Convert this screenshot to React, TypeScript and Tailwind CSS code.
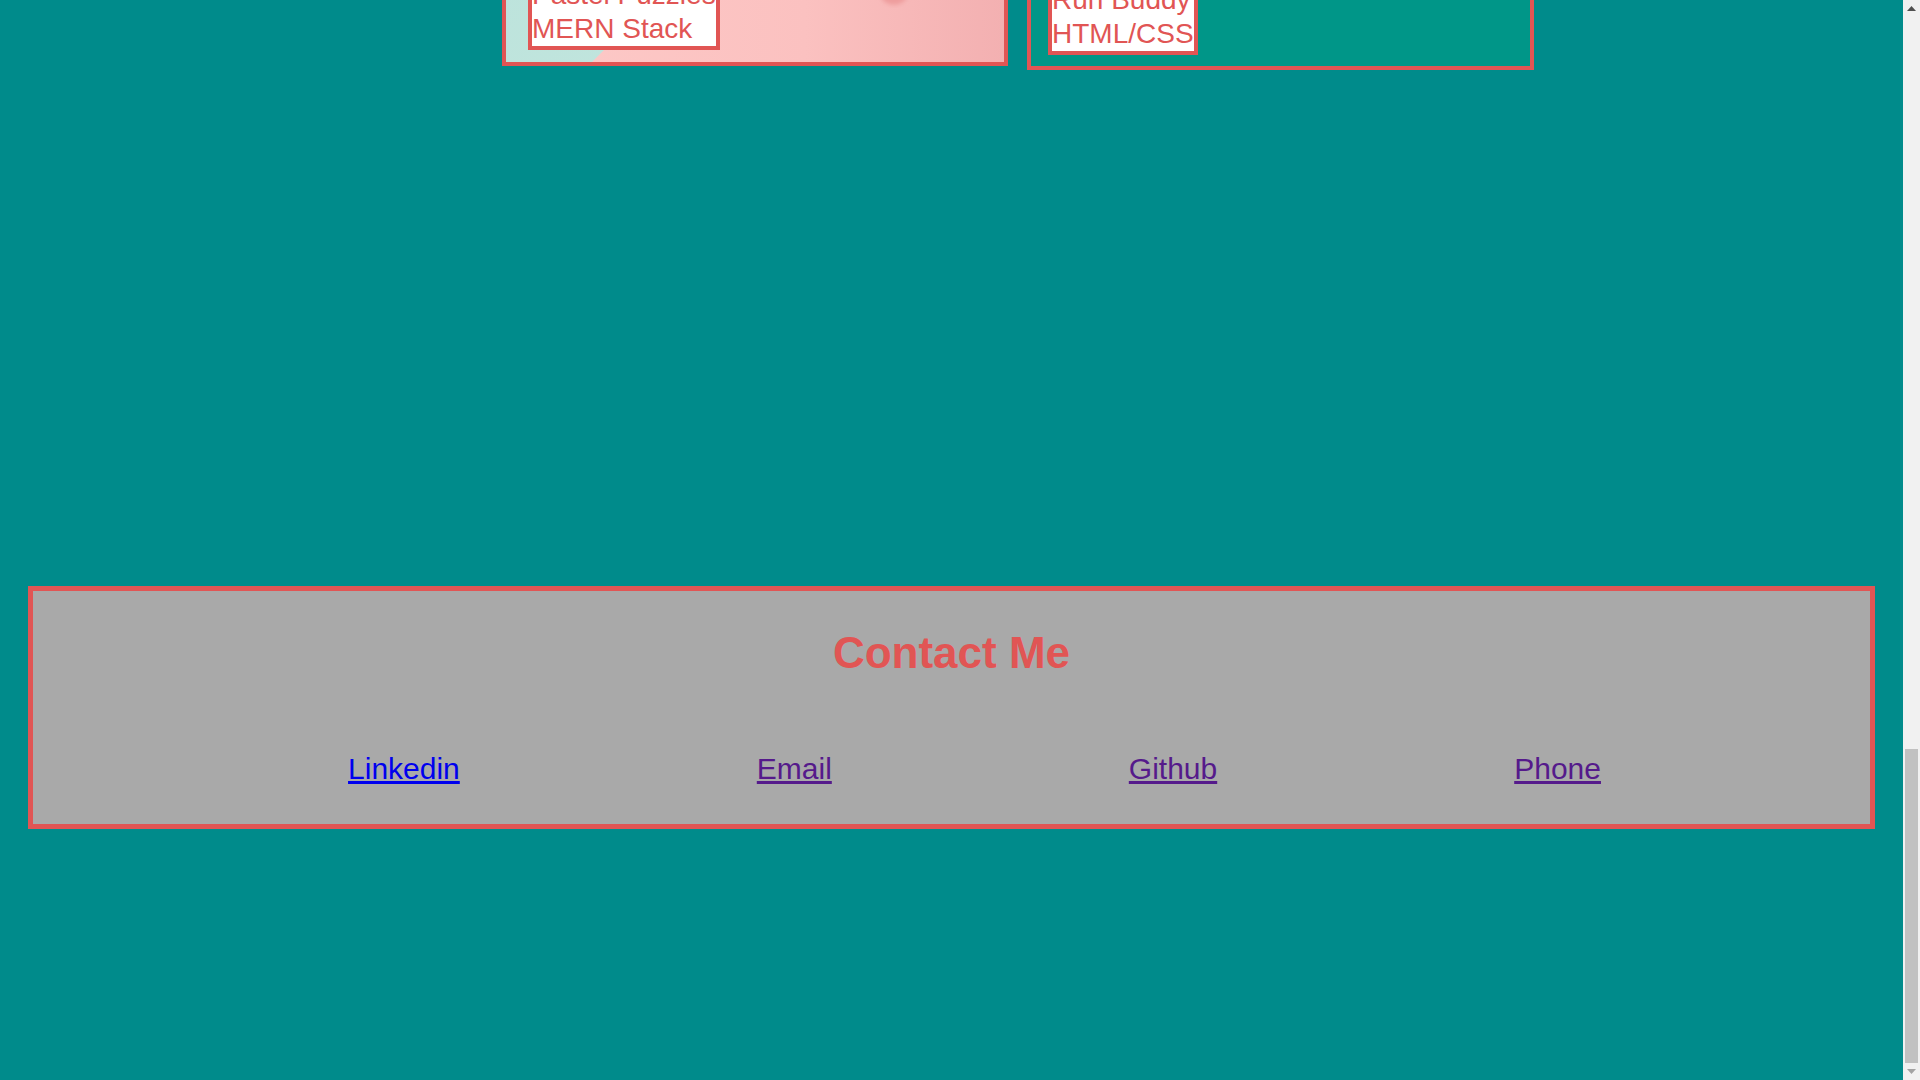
import React from "react"

// pastel puzzle screenshot (pink with mint corner)
function PuzzleArt() {
    return (
        <svg width="498" height="380" viewBox="0 0 498 380" preserveAspectRatio="none" className="block">
            <defs>
                <linearGradient id="pinkbg" x1="0" y1="0" x2="1" y2="0">
                    <stop offset="0" stopColor="#fdcac8" />
                    <stop offset="0.6" stopColor="#fbc1c0" />
                    <stop offset="1" stopColor="#f3b0b1" />
                </linearGradient>
                <linearGradient id="mint" x1="0" y1="0" x2="1" y2="1">
                    <stop offset="0" stopColor="#b7e2da" />
                    <stop offset="1" stopColor="#c6e6df" />
                </linearGradient>
                <filter id="soft">
                    <feGaussianBlur stdDeviation="2" />
                </filter>
            </defs>
            <rect width="498" height="380" fill="url(#pinkbg)" />
            <polygon points="0,0 466,0 86,380 0,380" fill="url(#mint)" />
            <circle cx="388" cy="308" r="15" fill="#ee9d9d" filter="url(#soft)" />
        </svg>
    )
}

// run buddy screenshot (teal)
function TealArt() {
    return <div className="h-[384px] w-full bg-[#009688]"></div>
}

type CardProps = {
    title: string
    stack: string
    art: "puzzle" | "teal"
}

function ProjectCard({ title, stack, art }: CardProps) {
    const puzzle = art === "puzzle"
    return (
        <div className={puzzle ? "relative w-[506px] border-4 border-[#e15554]" : "relative w-[507px] border-4 border-[#e15554]"}>
            {puzzle ? <PuzzleArt /> : <TealArt />}

            {/* Title label over the picture */}
            <div className={puzzle
                ? "absolute left-[22px] bottom-[12px] bg-white border-4 border-[#e15554] text-[#e15554] text-[28px] leading-[34px] whitespace-nowrap"
                : "absolute left-[17px] bottom-[11px] bg-white border-4 border-[#e15554] text-[#e15554] text-[28px] leading-[34px] whitespace-nowrap"}>
                <p>{title}</p>
                <p>{stack}</p>
            </div>
        </div>
    )
}

// window scrollbar, page is scrolled to the end
function Scrollbar() {
    return (
        <div className="w-[17px] h-full bg-[#f1f1f1] flex flex-col shrink-0">
            <div className="h-[17px] flex items-center justify-center">
                <svg width="9" height="5" viewBox="0 0 9 5"><polygon points="4.5,0 9,5 0,5" fill="#505050" /></svg>
            </div>
            <div className="flex-1"></div>
            <div className="h-[314px] px-[2px]">
                <div className="h-full bg-[#c1c1c1]"></div>
            </div>
            <div className="h-[17px] flex items-center justify-center">
                <svg width="9" height="5" viewBox="0 0 9 5"><polygon points="0,0 9,0 4.5,5" fill="#a3a3a3" /></svg>
            </div>
        </div>
    )
}

export default function App() {
    return (
        <div className="h-screen w-full flex font-['Liberation_Sans',Arial,sans-serif]">

            {/* Scroll container, starts at the bottom of the page */}
            <div className="flex-1 h-full overflow-y-scroll flex flex-col-reverse bg-[#008b8b] [scrollbar-width:none]">

                <div className="shrink-0 w-full pb-[251px]">

                    {/* Header */}
                    <header className="h-[200px] flex items-center justify-between px-[28px]">
                        <h1 className="text-[#e15554] text-5xl font-bold">Portfolio</h1>
                        <nav className="flex gap-8 text-2xl text-[#e15554]">
                            <span>About Me</span>
                            <span>Work</span>
                            <span>Contact Me</span>
                        </nav>
                    </header>

                    {/* About */}
                    <section className="h-[1032px] mx-[28px] pt-16">
                        <h2 className="text-[#e15554] text-[43px] font-bold text-center">About Me</h2>
                    </section>

                    {/* Projects */}
                    <section className="pl-[502px]">
                        <h2 className="h-[100px] text-[#e15554] text-[43px] font-bold">Work</h2>

                        <div className="flex flex-col gap-[40px]">
                            <div className="flex items-start gap-[19px]">
                                <ProjectCard title="Project One" stack="JavaScript" art="teal" />
                                <ProjectCard title="Project Two" stack="React" art="puzzle" />
                            </div>
                            <div className="flex items-start gap-[19px]">
                                <ProjectCard title="Project Three" stack="Node.js" art="puzzle" />
                                <ProjectCard title="Project Four" stack="MySQL" art="teal" />
                            </div>
                            <div className="flex items-start gap-[19px]">
                                <ProjectCard title="Pastel Puzzles" stack="MERN Stack" art="puzzle" />
                                <ProjectCard title="Run Buddy" stack="HTML/CSS" art="teal" />
                            </div>
                        </div>
                    </section>

                    {/* Contact */}
                    <section className="mt-[516px] mx-[28px] bg-[#a9a9a9] border-[5px] border-[#e15554] pt-[37px] pb-[37px]">
                        <h2 className="text-center text-[#e15554] text-[44px] leading-[50px] font-bold">Contact Me</h2>

                        <ul className="mt-[73px] flex justify-center gap-[297px] pl-[46px] text-[30px] leading-[36px]">
                            <li><a href="#" className="text-[#0000ee] underline">Linkedin</a></li>
                            <li><a href="#" className="text-[#551a8b] underline">Email</a></li>
                            <li><a href="#" className="text-[#551a8b] underline">Github</a></li>
                            <li><a href="#" className="text-[#551a8b] underline">Phone</a></li>
                        </ul>
                    </section>
                </div>
            </div>

            <Scrollbar />
        </div>
    )
}
